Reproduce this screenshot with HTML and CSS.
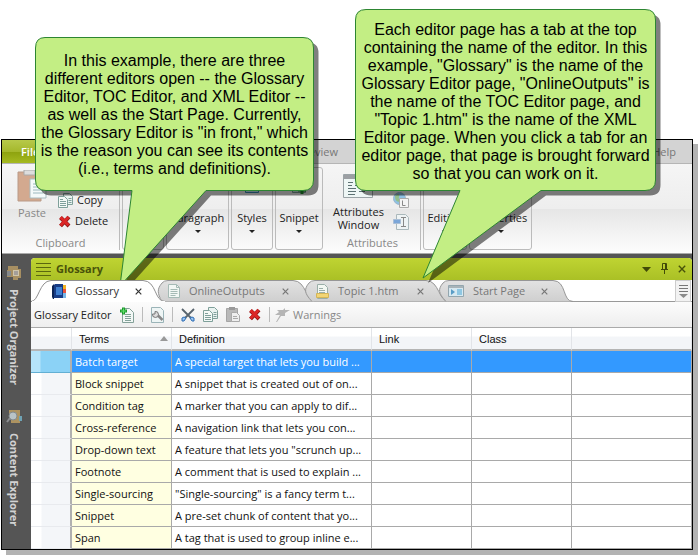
FILE: index.html
```html
<!DOCTYPE html>
<html lang="en">
<head>
<meta charset="utf-8">
<title>Glossary Editor</title>
<link rel="stylesheet" href="styles.css">
</head>
<body>
<svg width="0" height="0" class="defs" aria-hidden="true">
  <defs>
    <linearGradient id="tabFill" x1="0" y1="0" x2="0" y2="1"><stop offset="0" stop-color="#e2e2e2"/><stop offset="1" stop-color="#cfcfcf"/></linearGradient>
    <symbol id="doc" viewBox="0 0 12 14"><path d="M.5.5h8l3 3v10H.5z" fill="#f2f7f4" stroke="#a5bab5"/><path d="M8.500.5v3h3M2.500 5.500h7M2.500 7.500h7M2.500 9.500h7M2.500 11.500h5" fill="none" stroke="#a5bab5"/></symbol>
    <symbol id="copy" viewBox="0 0 15 15"><path d="M5.500.5h6l3 3v8h-9z" fill="#eaf3f1" stroke="#7fa09a"/><path d="M.5 3.500h6l3 3v8h-9z" fill="#f4f9f7" stroke="#7fa09a"/><path d="M2 6.500h3M2 8.500h6M2 10.500h6M2 12.500h6M10.500 5.500h3M10.500 7.500h3M10.500 9.500h3" stroke="#7f9f9b"/></symbol>
    <symbol id="cross" viewBox="0 0 13 13"><path d="M2.500 2.500l8.500 8.500M11 2L2.500 11" stroke="#8e1414" stroke-width="4"/><path d="M2.500 2.200l8 8M10.500 2L2.500 10.500" stroke="#dc2626" stroke-width="3"/></symbol>
    <symbol id="close" viewBox="0 0 7 7"><path d="M.7.7l5.600 5.600M6.300.7L.7 6.300" stroke="currentColor" stroke-width="1.200"/></symbol>
  </defs>
</svg>

<main class="stage">
  <section class="window">
    <nav class="menu">
      <button class="menu-file">File</button>
      <button class="menu-item">Review</button>
      <button class="menu-item help">Help</button>
    </nav>

    <div class="ribbon">
      <div class="clipboard">
        <div class="clip-tools">
          <button class="paste">
            <svg width="30" height="32" viewBox="0 0 30 32"><path d="M1 2h23v29H1z" fill="#d3a98f" stroke="#b99a88"/><path d="M7 0h11v5H7z" fill="#ddd" stroke="#aaa"/><path d="M13 9h12l4 4v15H13z" fill="#f4fafa" stroke="#a9bcc0"/><path d="M16 14h8M16 17h10M16 20h10M16 23h10" stroke="#9cb8be"/></svg>
            Paste
          </button>
          <div class="clip-list">
            <button class="tool"><svg width="15" height="15"><use href="#copy"/></svg>Copy</button>
            <button class="tool"><svg width="13" height="13"><use href="#cross"/></svg>Delete</button>
          </div>
        </div>
        <span class="group-name">Clipboard</span>
      </div>
      <div class="group narrow"></div>
      <button class="group wide">Paragraph<i class="down"></i></button>
      <button class="group narrow"><svg class="peek" width="14" height="14" viewBox="0 0 14 14"><path d="M.5.5h13v12H.5z" fill="#bfe1f3" stroke="#3a86b0"/><path d="M2 10.500h4M8 10.500h4" stroke="#2b6f97"/></svg>Styles<i class="down"></i></button>
      <button class="group middle"><svg class="peek" width="14" height="14" viewBox="0 0 14 14"><path d="M.5.5h13v12H.5z" fill="#c5ddd6" stroke="#7d9b95"/><path d="M6 10h8M10 6v8" stroke="#1f8a2b" stroke-width="3"/></svg>Snippet<i class="down"></i></button>
      <div class="attributes">
        <div class="attr-tools">
          <button class="attr-window">
            <svg width="30" height="24" viewBox="0 0 30 24"><path d="M.5.5h29v23H.5z" fill="#eef6f5" stroke="#9aa3a6"/><path d="M1 1h28v4H1z" fill="#9c9fa3"/><path d="M5 8.500h5M5 11.500h4M5 14.500h8M5 17.500h8M5 20.500h7M12 11.500h3M16 17.500h6" stroke="#5d7273"/></svg>
            <span>Attributes<br>Window</span>
          </button>
          <div class="attr-side">
            <svg width="16" height="16" viewBox="0 0 16 16"><circle cx="6.500" cy="6.500" r="6" fill="#8fc1e3" stroke="#9bb7cd"/><path d="M2 4c3-3 5-2 4 1s2 2 1 5c-4 0-5-3-5-6z" fill="#93bf8c"/><path d="M6.500 6.500h9v9h-9z" fill="#f4f4f4" stroke="#aaa"/><path d="M9.500 8.500v5h3" fill="none" stroke="#888"/></svg>
            <svg width="16" height="16" viewBox="0 0 16 16"><path d="M3.500.5h9l3 3v12h-12z" fill="#eef3f4" stroke="#aab8bb"/><path d="M.5 5.500h7v4h-7z" fill="#7ba6d8" stroke="#a9bed6"/><path d="M8 3.500h5M10.500 4v8M8 12.500h5" stroke="#888" fill="none"/></svg>
          </div>
        </div>
        <span class="group-name">Attributes</span>
      </div>
      <button class="group edit">Editing<i class="down"></i></button>
      <button class="group wide">Properties<i class="down"></i></button>
    </div>

    <div class="workspace">
      <aside class="sidebar">
        <button class="side-tab">
          <svg width="16" height="16" viewBox="0 0 16 16"><path d="M2 1h10v3h3v9h-3v2H7v-3H1V5h1z" fill="#a78f62"/><path d="M7 5h6v6H7z" fill="#d0c5aa"/><path d="M1 6h4v5H1z" fill="#85898c"/><path d="M8 7h4M8 9h4" stroke="#778"/></svg>
          Project Organizer
        </button>
        <button class="side-tab">
          <svg width="16" height="16" viewBox="0 0 16 16"><path d="M3 1h11v13H5V9H3z" fill="#ad9361"/><path d="M13 7h3v5h-3z" fill="#6fa3b5"/><circle cx="7" cy="7" r="4" fill="#b9c3c6" stroke="#848b8f"/><path d="M4 9l-3 4" stroke="#8b8d90" stroke-width="2"/></svg>
          Content Explorer
        </button>
      </aside>

      <section class="panel">
        <header class="titlebar">
          <svg width="15" height="13" viewBox="0 0 15 13"><path d="M0 .5h15M0 4.500h15M0 8.500h15M0 12.500h15" stroke="#5b670e"/></svg>
          <h1>Glossary</h1>
          <button aria-label="Menu"><svg width="9" height="5" viewBox="0 0 9 5"><path d="M0 0h9L4.500 5z" fill="#414a08"/></svg></button>
          <button aria-label="Pin"><svg width="9" height="12" viewBox="0 0 9 12"><path d="M2.500 6V.5h4V6M5.500 1v5M1 6.500h7M4.500 7v4" fill="none" stroke="#414a08"/></svg></button>
          <button aria-label="Close panel"><svg width="8" height="8" viewBox="0 0 7 7"><use href="#close"/></svg></button>
        </header>

        <div class="tabs">
          <div class="tab first active">
            <svg class="shape" width="142" height="22" viewBox="0 0 142 22"><path d="M0 21.500C8 21.500 8 1 20 .5H112C126 1 123 21.500 134 21.500" fill="#fff" stroke="#8f8f8f"/><path d="M1 21.500H134" stroke="#fff"/></svg>
            <svg class="tab-icon" width="14" height="15" viewBox="0 0 14 15"><path d="M2 1l1-1h8v14H2z" fill="#183c86"/><path d="M0 2l2-2v15H1L0 13z" fill="#0d2455"/><path d="M4 3h6v8H4z" fill="#3f7fd0"/><path d="M11 1h3v4h-3z" fill="#f3b221"/><path d="M11 5h3v4h-3z" fill="#e9523d"/><path d="M11 9h3v5h-3z" fill="#78b7e8"/></svg>
            <a href="#glossary">Glossary</a><button aria-label="Close Glossary"><svg width="7" height="7"><use href="#close"/></svg></button>
          </div>
          <div class="tab second">
            <svg class="shape" width="160" height="22" viewBox="0 0 160 22"><path d="M5 21.500C0 13 0 9 5 3Q7 .5 11 .5H136C150 1 148 21.500 159 21.500" fill="url(#tabFill)" stroke="#969696"/></svg>
            <svg class="tab-icon" width="12" height="14"><use href="#doc"/></svg>
            <a href="#outputs">OnlineOutputs</a><button aria-label="Close OnlineOutputs"><svg width="7" height="7"><use href="#close"/></svg></button>
          </div>
          <div class="tab third">
            <svg class="shape" width="146" height="22" viewBox="0 0 146 22"><path d="M8 21.500C0 13 0 9 5 3Q7 .5 11 .5H122C136 1 134 21.500 145 21.500" fill="url(#tabFill)" stroke="#969696"/></svg>
            <svg class="tab-icon" width="13" height="15" viewBox="0 0 13 15"><path d="M1.500.5h7l3 3v11h-10z" fill="#f3f7f2" stroke="#9aaea8"/><path d="M3 4.500h4M3 6.500h6M3 8.500h6" stroke="#9aaea8"/><path d="M.5 9.500h12v4H.5z" fill="#f2d574" stroke="#d3b558"/></svg>
            <a href="#topic">Topic 1.htm</a><button aria-label="Close Topic 1.htm"><svg width="7" height="7"><use href="#close"/></svg></button>
          </div>
          <div class="tab fourth">
            <svg class="shape" width="135" height="22" viewBox="0 0 135 22"><path d="M8 21.500C0 13 0 9 5 3Q7 .5 11 .5H115C129 1 124 21.500 135 21.500" fill="url(#tabFill)" stroke="#969696"/></svg>
            <svg class="tab-icon" width="16" height="12" viewBox="0 0 16 12"><path d="M.5.5h15v11H.5z" fill="#d7e9f1" stroke="#93a6ae"/><path d="M1 1h14v2H1z" fill="#a9b4b9"/><path d="M3 4l4 3-4 3z" fill="#5a9dc6"/><path d="M9 4h5v6H9z" fill="#8fc7e2"/></svg>
            <a href="#start">Start Page</a><button aria-label="Close Start Page"><svg width="7" height="7"><use href="#close"/></svg></button>
          </div>
          <button class="tab-list" aria-label="All tabs"><svg width="9" height="13" viewBox="0 0 9 13"><path d="M0 .5h9M0 3.500h9M0 6.500h9" stroke="#777"/><path d="M0 9h9l-4.500 4z" fill="#8a8a8a"/></svg></button>
        </div>

        <div class="toolbar">
          <span class="tool-title">Glossary Editor</span>
          <button aria-label="New term"><svg width="14" height="16" viewBox="0 0 14 16"><path d="M2.500 1.500h7l4 4v10h-11z" fill="#f3f8f6" stroke="#84a199"/><path d="M5 7.500h6M5 9.500h6M5 11.500h6M5 13.500h6" stroke="#84a199"/><path d="M0 4h7M3.500.5v7" stroke="#1d9a2d" stroke-width="3"/><path d="M1 4h5M3.500 1.500v5" stroke="#5fe06a"/></svg></button>
          <i class="bar"></i>
          <button aria-label="Options"><svg width="13" height="16" viewBox="0 0 13 16"><path d="M.5.5h9l3 3v12H.5z" fill="#eef5f5" stroke="#9bb4b8"/><path d="M6.500 8l5 5" stroke="#888" stroke-width="2.500"/><path d="M4 4.500v2.500h-2.500A3 3 0 1 0 4 4.500z" fill="#ddd" stroke="#777"/></svg></button>
          <i class="bar"></i>
          <button aria-label="Cut"><svg width="14" height="14" viewBox="0 0 14 14"><path d="M1 1l10 10M13 1L3 11" stroke="#58646e" stroke-width="1.800"/><path d="M1 10q2-2 4 0l-2 3H1zM9 10q2-2 4 0v3h-2z" fill="#9bc4ee" stroke="#2c6db5"/></svg></button>
          <button aria-label="Copy"><svg width="15" height="15"><use href="#copy"/></svg></button>
          <button aria-label="Paste"><svg width="14" height="16" viewBox="0 0 14 16"><path d="M.5 1.500h11v13H.5z" fill="#b9b9b9" stroke="#a5a5a5"/><path d="M3 0h6v3H3z" fill="#999"/><path d="M5.500 5.500h5l3 3v6h-8z" fill="#efefef" stroke="#aaa"/><path d="M7 9.500h4M7 11.500h5" stroke="#aaa"/></svg></button>
          <button aria-label="Delete"><svg width="13" height="13"><use href="#cross"/></svg></button>
          <i class="bar"></i>
          <button class="warnings"><svg width="15" height="14" viewBox="0 0 15 14"><path d="M2 2h6l2-2v2h5l-5 3v3H6l-4 6H1l4-7H0l4-3z" fill="#b5b5b5"/></svg>Warnings</button>
        </div>

        <table>
          <colgroup><col class="c-mark"><col class="c-term"><col class="c-def"><col class="c-link"><col class="c-link"><col></colgroup>
          <thead><tr><th></th><th><span class="sort">Terms<i></i></span></th><th>Definition</th><th>Link</th><th>Class</th><th></th></tr></thead>
          <tbody>
            <tr class="selected"><td></td><td>Batch target</td><td>A special target that lets you build ...</td><td></td><td></td><td></td></tr>
            <tr><td></td><td>Block snippet</td><td>A snippet that is created out of on...</td><td></td><td></td><td></td></tr>
            <tr><td></td><td>Condition tag</td><td>A marker that you can apply to dif...</td><td></td><td></td><td></td></tr>
            <tr><td></td><td>Cross-reference</td><td>A navigation link that lets you con...</td><td></td><td></td><td></td></tr>
            <tr><td></td><td>Drop-down text</td><td>A feature that lets you "scrunch up...</td><td></td><td></td><td></td></tr>
            <tr><td></td><td>Footnote</td><td>A comment that is used to explain ...</td><td></td><td></td><td></td></tr>
            <tr><td></td><td>Single-sourcing</td><td>"Single-sourcing" is a fancy term t...</td><td></td><td></td><td></td></tr>
            <tr><td></td><td>Snippet</td><td>A pre-set chunk of content that yo...</td><td></td><td></td><td></td></tr>
            <tr><td></td><td>Span</td><td>A tag that is used to group inline e...</td><td></td><td></td><td></td></tr>
          </tbody>
        </table>
      </section>
    </div>
  </section>

  <div class="callout one">
    <svg width="290" height="260" viewBox="0 0 290 260"><path class="shade" d="M10 .5H268Q278.500.5 278.500 11V143Q278.500 153.500 268 153.500H171L85 249L97 153.500H11Q.5 153.500 .5 143V11Q.5.5 10 .5z" transform="translate(5 5)"/><path class="bubble" d="M10 .5H268Q278.500.5 278.500 11V143Q278.500 153.500 268 153.500H171L85 249L97 153.500H11Q.5 153.500 .5 143V11Q.5.5 10 .5z"/></svg>
    <p>In this example, there are three<br>different editors open -- the Glossary<br>Editor, TOC Editor, and XML Editor --<br>as well as the Start Page. Currently,<br>the Glossary Editor is "in front," which<br>is the reason you can see its contents<br>(i.e., terms and definitions).</p>
  </div>
  <div class="callout two">
    <svg width="315" height="285" viewBox="0 0 315 285"><path class="shade" d="M11 .5H290Q300.500.5 300.500 11V171Q300.500 181.500 290 181.500H186L68 269L105 181.500H11Q.5 181.500 .5 171V11Q.5.5 11 .5z" transform="translate(5 5)"/><path class="bubble" d="M11 .5H290Q300.500.5 300.500 11V171Q300.500 181.500 290 181.500H186L68 269L105 181.500H11Q.5 181.500 .5 171V11Q.5.5 11 .5z"/></svg>
    <p>Each editor page has a tab at the top<br>containing the name of the editor. In this<br>example, "Glossary" is the name of the<br>Glossary Editor page, "OnlineOutputs" is<br>the name of the TOC Editor page, and<br>"Topic 1.htm" is the name of the XML<br>Editor page. When you click a tab for an<br>editor page, that page is brought forward<br>so that you can work on it.</p>
  </div>
</main>
</body>
</html>
```
FILE: styles.css
```css
* { box-sizing: border-box; }
body { margin: 0; background: #fff; color: #222; font: 11px/16px "Open Sans", "Noto Sans", sans-serif; }
button { font: inherit; color: inherit; background: none; border: 0; padding: 0; margin: 0; }
a { color: inherit; text-decoration: none; }
svg { display: block; flex: none; }
.defs { position: absolute; }
.stage { position: relative; padding: 139px 5px 5px 1px; overflow: hidden; }
.window { border: 1px solid #000; background: #fff; box-shadow: 5px 5px 0 #b3b3b3; overflow: hidden; }

/* Ribbon */
.menu { display: flex; height: 24px; background: #d3d3d3; border-bottom: 1px solid #b5b5b5; color: #777; }
.menu-file { width: 72px; padding-left: 19px; text-align: left; color: #fff; font-weight: 600; background: linear-gradient(#b7c94a, #a5b82c 50%, #8da20e 51%, #a5ba20); }
.menu-item { margin-left: 228px; }
.menu-item.help { margin-left: auto; margin-right: 16px; }
.ribbon { display: flex; gap: 2px; height: 90px; padding: 3px 0; border-bottom: 1px solid #aaa; background: linear-gradient(#f5f5f5, #eee 50%, #e6e6e6 51%, #fdfdfd); }
.clipboard, .attributes { display: flex; flex-direction: column; justify-content: space-between; border-right: 1px solid #bbb; }
.clipboard { width: 118px; }
.clip-tools { display: flex; gap: 11px; padding-left: 15px; }
.paste { display: flex; flex-direction: column; align-items: center; gap: 3px; padding-top: 3px; color: #888; }
.clip-list { display: flex; flex-direction: column; gap: 5px; padding-top: 25px; }
.tool { display: flex; align-items: center; gap: 4px; }
.group-name { text-align: center; color: #888; line-height: 14px; }
.group { position: relative; border: 1px solid #bbb; border-radius: 3px; display: flex; flex-direction: column; align-items: center; gap: 4px; padding-top: 42px; }
.narrow { width: 42px; }
.middle { width: 48px; }
.edit { width: 44px; }
.wide { width: 63px; }
.peek { position: absolute; top: 12px; }
.down { border: 3px solid transparent; border-top: 3px solid #222; border-bottom: 0; }
.attributes { width: 96px; }
.attr-tools { display: flex; gap: 9px; padding-left: 8px; }
.attr-window { display: flex; flex-direction: column; align-items: center; gap: 7px; padding-top: 7px; line-height: 13px; }
.attr-side { display: flex; flex-direction: column; gap: 6px; padding-top: 25px; }

/* Workspace */
.workspace { display: flex; background: #555; }
.sidebar { width: 29px; padding-top: 11px; display: flex; flex-direction: column; gap: 24px; }
.side-tab { display: flex; align-items: center; gap: 8px; padding-right: 5px; font-weight: 700; color: #d2d2d2; writing-mode: vertical-rl; }
.panel { flex: 1; min-width: 0; margin-top: 4px; background: #fff; border-radius: 4px 4px 0 0; overflow: hidden; }
.titlebar { display: flex; align-items: center; gap: 9px; height: 22px; padding: 0 6px 0 5px; background: linear-gradient(#bfd432, #aac025); color: #48520a; }
.titlebar h1 { flex: 1; margin: 0 0 0 -4px; font-size: 11px; }
.tabs { display: flex; height: 22px; background: linear-gradient(#999, #999) bottom / 100% 1px no-repeat #fff; color: #777; }
.tab { position: relative; display: flex; align-items: center; padding-right: 15px; }
.tab.active { z-index: 1; color: #333; }
.shape { position: absolute; left: 0; top: 0; }
.tab-icon, .tab a, .tab button { position: relative; }
.tab a { flex: 1; margin-left: 9px; white-space: nowrap; }
.first { width: 126px; padding-left: 21px; }
.second { width: 147px; padding-left: 11px; }
.third { width: 134px; padding-left: 12px; padding-right: 14px; }
.fourth { width: 118px; padding-left: 10px; padding-right: 8px; }
.tab-list { width: 16px; margin: 0 1px 0 auto; display: grid; place-items: center; background: #f2f2f2; border: 1px solid #ccc; }
.toolbar { display: flex; align-items: center; gap: 8px; height: 26px; padding-left: 3px; background: linear-gradient(#fcfcfc, #eee); border-bottom: 1px solid #aaa; }
.tool-title { width: 78px; white-space: nowrap; color: #222; }
.bar { width: 1px; height: 15px; background: #bbb; }
.warnings { display: flex; align-items: center; gap: 3px; color: #888; margin-left: -3px; }

/* Glossary grid */
table { width: 100%; table-layout: fixed; border-collapse: separate; border-spacing: 0; background: #fff; color: #111; }
.c-mark { width: 41px; }
.c-term { width: 100px; }
.c-def { width: 200px; }
.c-link { width: 100px; }
th { height: 23px; padding: 0 7px; text-align: left; font: 11px/16px "Liberation Sans", sans-serif; background: linear-gradient(#fff 40%, #f3f5f8 41%, #f3f5f8); border-right: 1px solid #e2e4e8; border-bottom: 2px solid #b5b5b5; }
.sort { display: flex; justify-content: space-between; align-items: center; }
.sort i { border: 4px solid transparent; border-top: 0; border-bottom: 5px solid #999; margin-right: -4px; }
td { height: 22px; padding: 0 3px; white-space: nowrap; overflow: hidden; border-right: 1px solid #a9a9a9; border-bottom: 1px solid #a9a9a9; }
td:first-child { border-right: 2px solid #b0b0b0; border-bottom-color: #e8eaee; background: linear-gradient(90deg, #fff 10px, #f4f6f9 11px, #f4f6f9); }
td:nth-child(2) { background: #ffffe1; }
.selected td { background: #3399ff; color: #fff; }
.selected td:first-child { background: linear-gradient(90deg, #b5e4fa 9px, #8bd2f6 10px, #8bd2f6); border-bottom-color: #62afd3; }

/* Callouts */
.callout { position: absolute; color: #000; text-align: center; font: 16px/18px "Liberation Sans", Arial, sans-serif; }
.callout svg { position: absolute; left: 0; top: 0; }
.callout p { position: relative; margin: 0; white-space: nowrap; }
.one { left: 35px; top: 37px; width: 279px; padding-top: 15px; }
.two { left: 355px; top: 9px; width: 301px; padding-top: 12px; }
.shade { fill: #000; fill-opacity: .5; }
.bubble { fill: #c3ee84; stroke: #2d8532; }
```
